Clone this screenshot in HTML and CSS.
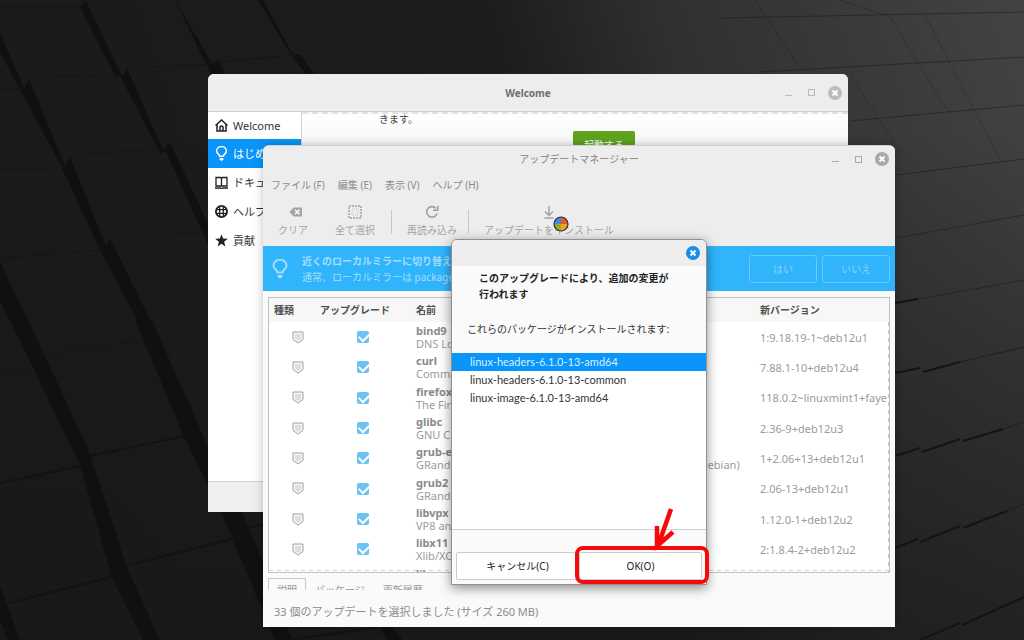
FILE: index.html
```html
<!DOCTYPE html>
<html lang="ja">
<head>
<meta charset="utf-8">
<title>アップデートマネージャー</title>
<link rel="stylesheet" href="styles.css">
</head>
<body>
<svg width="0" height="0" class="defs" aria-hidden="true">
  <symbol id="close" viewBox="0 0 14 14"><circle cx="7" cy="7" r="7" fill="currentColor"/><path d="M4.500 4.500l5 5m0-5l-5 5" stroke="#fff" stroke-width="2"/></symbol>
  <symbol id="bulb" viewBox="0 0 16 20"><path d="M5.500 13.500c0-2.500-4-3.200-4-7a6.500 5.800 0 0 1 13 0c0 3.800-4 4.500-4 7z" fill="none" stroke="currentColor" stroke-width="2"/><path d="M5.500 16h5v1.500l-1.500 2H7l-1.500-2z" fill="currentColor"/></symbol>
  <symbol id="shield" viewBox="0 0 12 13"><path d="M1 1h10v7.500L6 12 1 8.500z" fill="#f6f6f6" stroke="#a0a0a0"/><path d="M3 3h6v4.500L6 10 3 7.500z" fill="#dedede"/></symbol>
</svg>
<main class="desktop">
  <svg class="wallpaper" viewBox="0 0 1024 640" preserveAspectRatio="none" aria-hidden="true">
    <defs>
      <linearGradient id="shade" x1="0" y1="0.200" x2="1" y2="0"><stop offset="0" stop-color="#1a1a1a"/><stop offset=".5" stop-color="#1d1d1d"/><stop offset=".66" stop-color="#303030"/><stop offset="1" stop-color="#434343"/></linearGradient>
      <linearGradient id="fall" x1="0" y1="0" x2="0" y2="1"><stop offset=".2" stop-color="#181818" stop-opacity="0"/><stop offset="1" stop-color="#181818" stop-opacity=".7"/></linearGradient>
    </defs>
    <rect width="1024" height="640" fill="url(#shade)"/>
    <rect width="1024" height="640" fill="url(#fall)"/>
    <g fill="#101010">
      <path d="M0 33L24 88 29 79 65 166 70 157 106 246 110 238 150 320 190 405 240 525 246 535 292 640 275 640 228 528 180 412 140 325 100 250 62 168 58 160 20 90 0 52z"/>
      <path d="M80 7L86 1 122 76 127 68 163 150 170 142 210 228 208 245 166 152 160 153 120 76 116 78z"/>
      <path d="M175 0L212 64 218 60 225 74 211 74 206 64z"/>
      <path d="M258 0L263 0 293 55 300 54 314 74 306 74 292 56z"/>
      <path d="M0 262L28 320 84 440 90 455 128 570 160 640 143 640 112 578 80 465 10 320 0 302z"/>
      <path d="M0 586L20 640 8 640 0 620z"/>
      <path d="M135 320L152 320 208 448 208 486 182 432z"/>
      <path d="M228 512L242 512 291 627 284 627z"/>
      <path d="M380 627L392 627 403 640 387 640z"/>
    </g>
    <g fill="none" stroke="#121212" stroke-width="2">
      <path d="M0 483L85 465M85 457L185 436M130 565L240 537M10 603L115 576M240 530L263 524M290 640L440 618"/>
    </g>
    <g fill="none" stroke="#161616">
      <path d="M0 7L80 7M25 77L120 75M125 68L212 64M0 90L24 88M68 155L165 149M0 170L58 168M110 238L205 232M0 258L100 250M45 355L145 340M0 375L30 369M150 328L208 320M218 62L295 55"/>
    </g>
    <g fill="none" stroke="#1c1c1c" stroke-opacity=".55">
      <path d="M720 18L1024 12M760 72L1024 57M850 121L1024 105M897 175L1024 159M897 238L1024 215M897 303L1024 280"/>
      <path stroke-opacity=".3" d="M700 0L718 15M755 0L800 68M850 75L902 155M840 0L890 17 950 115M925 15L1000 160M915 200L950 235"/>
    </g>
    <g fill="none" stroke="#141414" stroke-width="2">
      <path d="M895 373L920 368M923 372L960 362M895 303L918 299M895 456L920 448M922 452L960 439M963 441L1003 429M895 548L918 539M920 542L960 526M963 528L1007 511M920 640L960 623M962 625L1024 597"/>
    </g>
    <path d="M960 362L1024 347M1003 429L1024 422M1007 511L1024 504" stroke="#1f1f1f"/>
  </svg>

  <section class="window welcome" aria-label="Welcome">
    <header class="titlebar">
      <h1 class="title strong">Welcome</h1>
      <div class="controls faded">
        <button class="ctl" aria-label="最小化"><span class="min"></span></button>
        <button class="ctl" aria-label="最大化"><span class="max"></span></button>
        <button class="ctl" aria-label="閉じる"><svg class="x"><use href="#close"/></svg></button>
      </div>
    </header>
    <div class="welcome-body">
      <nav class="side">
        <a href="#" class="side-item first"><svg class="side-icon" viewBox="0 0 13 13" fill="none" stroke="#222" stroke-width="1.500"><path d="M.5 6.500L6.500 1l6 5.500M2 5.500v6.500h9V5.500M5 12V8q1.500-2 3 0v4"/></svg>Welcome</a>
        <a href="#" class="side-item active"><svg class="side-icon"><use href="#bulb"/></svg>はじめに</a>
        <a href="#" class="side-item"><svg class="side-icon" viewBox="0 0 13 13" fill="none" stroke="#222" stroke-width="1.300"><path d="M1 1.500h4.500l1 1 1-1H12V10H1zM6.500 2v8M0 12h5l1.500.5L8 12h5"/></svg>ドキュメント</a>
        <a href="#" class="side-item"><svg class="side-icon" viewBox="0 0 13 13" fill="none" stroke="#222"><circle cx="6.500" cy="6.500" r="5.600" stroke-width="1.800"/><path d="M4.700 1v11M8.300 1v11M1 4.700h11M1 8.300h11" stroke-width="1.300"/></svg>ヘルプ</a>
        <a href="#" class="side-item"><svg class="side-icon" viewBox="0 0 13 13"><path d="M6.500.3l1.600 4.300 4.700.2-3.700 2.900 1.300 4.700-3.900-2.700-3.900 2.700 1.300-4.700L.2 4.800l4.700-.2z" fill="#222"/></svg>貢献</a>
      </nav>
      <div class="page">
        <p class="page-text">きます。</p>
        <button class="launch">起動する</button>
      </div>
    </div>
    <footer class="welcome-foot"></footer>
  </section>

  <section class="window manager" aria-label="アップデートマネージャー">
    <header class="titlebar short">
      <h1 class="title">アップデートマネージャー</h1>
      <div class="controls">
        <button class="ctl" aria-label="最小化"><span class="min"></span></button>
        <button class="ctl" aria-label="最大化"><span class="max"></span></button>
        <button class="ctl" aria-label="閉じる"><svg class="x"><use href="#close"/></svg></button>
      </div>
    </header>
    <nav class="menubar">
      <button class="menu">ファイル (F)</button><button class="menu">編集 (E)</button><button class="menu">表示 (V)</button><button class="menu">ヘルプ (H)</button>
    </nav>
    <div class="toolbar">
      <button class="tool narrow"><svg class="tool-icon shifted" viewBox="0 0 14 14"><path d="M4.500 2.500h8.500v9H4.500L.5 7z" fill="#a6a6a6"/><path d="M6 4.800l4.500 4.500m0-4.500L6 9.300" stroke="#fff" stroke-width="1.500"/></svg>クリア</button>
      <button class="tool wide"><svg class="tool-icon" viewBox="0 0 14 14" fill="none" stroke="#a0a0a0"><path d="M1 1h12v12H1z" stroke-width="1.500" stroke-dasharray="2 1"/><path d="M4 4h6v6H4z" stroke-dasharray="1 1" stroke="#c0c0c0"/></svg>全て選択</button>
      <span class="sep"></span>
      <button class="tool wide"><svg class="tool-icon" viewBox="0 0 14 14" fill="none" stroke="#a0a0a0" stroke-width="1.600"><path d="M11 3.500A5.300 5.300 0 1 0 12 8.500M12.800.8v4.500H8"/></svg>再読み込み</button>
      <span class="sep"></span>
      <button class="tool install"><svg class="tool-icon" viewBox="0 0 14 14" fill="none" stroke="#a0a0a0" stroke-width="1.400"><path d="M7 1v9M3 6.500l4 4 4-4M2.500 13h9"/></svg>アップデートをインストール</button>
    </div>
    <div class="infobar">
      <svg class="info-icon"><use href="#bulb"/></svg>
      <div class="info-text"><strong>近くのローカルミラーに切り替え</strong><span>通常、ローカルミラーは packages</span></div>
      <button class="answer">はい</button><button class="answer">いいえ</button>
    </div>
    <div class="content">
      <div class="list-frame">
        <table class="updates">
          <colgroup><col class="c-kind"><col class="c-check"><col class="c-name"><col></colgroup>
          <thead><tr><th>種類</th><th>アップグレード</th><th>名前</th><th>新バージョン</th></tr></thead>
          <tbody>
            <tr><td><svg class="shield"><use href="#shield"/></svg></td><td><input type="checkbox" aria-label="bind9" checked></td><td><b>bind9</b>DNS Lookup</td><td>1:9.18.19-1~deb12u1</td></tr>
            <tr><td><svg class="shield"><use href="#shield"/></svg></td><td><input type="checkbox" aria-label="curl" checked></td><td><b>curl</b>Command</td><td>7.88.1-10+deb12u4</td></tr>
            <tr><td><svg class="shield"><use href="#shield"/></svg></td><td><input type="checkbox" aria-label="firefox" checked></td><td><b>firefox</b>The Firefox</td><td>118.0.2~linuxmint1+faye</td></tr>
            <tr><td><svg class="shield"><use href="#shield"/></svg></td><td><input type="checkbox" aria-label="glibc" checked></td><td><b>glibc</b>GNU C Lib</td><td>2.36-9+deb12u3</td></tr>
            <tr><td><svg class="shield"><use href="#shield"/></svg></td><td><input type="checkbox" aria-label="grub-efi" checked></td><td><b>grub-efi</b>GRand Unified Bootloader, version 2 (amd64 signed by Debian)</td><td>1+2.06+13+deb12u1</td></tr>
            <tr><td><svg class="shield"><use href="#shield"/></svg></td><td><input type="checkbox" aria-label="grub2" checked></td><td><b>grub2</b>GRand Un</td><td>2.06-13+deb12u1</td></tr>
            <tr><td><svg class="shield"><use href="#shield"/></svg></td><td><input type="checkbox" aria-label="libvpx" checked></td><td><b>libvpx</b>VP8 and</td><td>1.12.0-1+deb12u2</td></tr>
            <tr><td><svg class="shield"><use href="#shield"/></svg></td><td><input type="checkbox" aria-label="libx11" checked></td><td><b>libx11</b>Xlib/XCB</td><td>2:1.8.4-2+deb12u2</td></tr>
            <tr><td></td><td></td><td><b>lib</b>X11</td><td></td></tr>
          </tbody>
        </table>
      </div>
      <div class="tabs"><button class="tab on">説明</button><button class="tab">パッケージ</button><button class="tab">更新履歴</button></div>
      <p class="status">33 個のアップデートを選択しました (サイズ 260 MB)</p>
    </div>
  </section>

  <section class="window dialog" role="dialog" aria-labelledby="dialog-title">
    <header class="dialog-bar"><button class="ctl" aria-label="閉じる"><svg class="x"><use href="#close"/></svg></button></header>
    <h2 class="dialog-title" id="dialog-title">このアップグレードにより、追加の変更が<br>行われます</h2>
    <p class="dialog-text">これらのパッケージがインストールされます:</p>
    <ul class="packages">
      <li class="selected">linux-headers-6.1.0-13-amd64</li>
      <li>linux-headers-6.1.0-13-common</li>
      <li>linux-image-6.1.0-13-amd64</li>
    </ul>
    <footer class="dialog-foot"><button class="choice">キャンセル(C)</button><button class="choice">OK(O)</button></footer>
  </section>

  <svg class="marker" viewBox="0 0 136 80" fill="none" stroke="#f50a0a" aria-hidden="true">
    <rect x="3" y="42" width="130" height="34" rx="6" stroke-width="4"/>
    <path d="M97 3L84 40M83 20V40L99 26" stroke-width="4.500"/><path d="M82 30l8 2-8 9z" fill="#f50a0a"/>
  </svg>
  <svg class="pointer" viewBox="0 0 16 16" aria-hidden="true">
    <circle cx="8" cy="8" r="7" fill="#f2a51c"/><path d="M8 8V1a7 7 0 0 1 7 7z" fill="#e8562c"/><path d="M8 8V1a7 7 0 0 0-7 7z" fill="#3f8ae0"/><path d="M8 8H1a7 7 0 0 0 7 7z" fill="#8fae2c"/><circle cx="8" cy="8" r="7" fill="none" stroke="#26303a" stroke-width="1.200"/>
  </svg>
</main>
</body>
</html>
```

FILE: styles.css
```css
* { box-sizing: border-box; }
body, h1, h2, p, ul { margin: 0; padding: 0; }
body {
  font: 11px/16px "Noto Sans", "Noto Sans CJK JP", sans-serif;
  color: #333;
  background: #1a1a1a;
}
button { font: inherit; color: inherit; background: none; border: 0; padding: 0; margin: 0; }
a { color: inherit; text-decoration: none; }
.defs { position: absolute; }
.desktop { position: relative; min-height: 100vh; overflow: hidden; }
.wallpaper { position: absolute; inset: 0; width: 100%; height: 100%; }

.window { position: absolute; display: flex; flex-direction: column; border-radius: 6px 6px 0 0; overflow: hidden; }
.welcome { left: 208px; top: 74px; width: 640px; height: 438px; background: #fff; }
.manager { left: 263px; top: 145px; width: 632px; height: 482px; background: #ededed; border-top: 1px solid #d0d0d0; box-shadow: 0 0 10px rgba(0, 0, 0, .25); }
.dialog { left: 451px; top: 239px; width: 256px; height: 346px; background: #fafafa; border: 1px solid #909090; box-shadow: 0 3px 12px rgba(0, 0, 0, .45); }

.titlebar { display: grid; grid-template-columns: 1fr auto 1fr; align-items: center; height: 38px; background: #ededed; border-bottom: 1px solid #cfcfcf; flex: none; }
.titlebar.short { height: 26px; border: 0; }
.title { grid-column: 2; font-size: 10px; font-weight: 400; color: #848484; }
.title.strong { font-size: 10px; font-weight: 700; color: #707070; }
.controls { display: flex; justify-content: flex-end; align-items: center; gap: 8px; padding-right: 6px; color: #a9a9a9; }
.controls.faded { color: #bcbcbc; }
.ctl { display: flex; align-items: center; justify-content: center; width: 15px; height: 15px; }
.x { width: 14px; height: 14px; }
.min { width: 7px; border-top: 1px solid currentColor; margin-top: 5px; }
.max { width: 7px; height: 7px; border: 1px solid currentColor; }

.welcome-body { display: flex; flex: 1; min-height: 0; }
.side { width: 94px; border-right: 1px solid #d4d4d4; }
.side-item { display: flex; align-items: center; gap: 5px; height: 29px; padding-left: 7px; white-space: nowrap; }
.side-item.first { height: 27px; }
.side-item.active { background: #0995f9; color: #fff; }
.side-icon { width: 13px; height: 13px; flex: none; }
.side-item.active .side-icon { height: 15px; }
.page { flex: 1; border-top: 2px dashed #e2e2e2; padding-left: 77px; background: linear-gradient(#fff, #f8f8f8 32px); }
.page-text { font-size: 10px; line-height: 10px; color: #444; }
.launch { display: block; margin: 7px 0 0 194px; width: 62px; height: 27px; background: #5fa31f; color: #fff; border-radius: 2px; font-size: 10px; }
.welcome-foot { height: 31px; background: #efefef; border-top: 1px solid #cfcfcf; }

.menubar { display: flex; gap: 13px; padding: 5px 8px; color: #8c8c8c; font-size: 10px; }
.menu { white-space: nowrap; }
.toolbar { display: flex; align-items: center; height: 48px; color: #a3a3a3; font-size: 10px; flex: none; }
.tool { display: flex; flex-direction: column; align-items: center; gap: 3px; height: 35px; white-space: nowrap; }
.tool-icon { width: 14px; height: 14px; flex: none; }
.tool-icon.shifted { margin-left: 6px; }
.narrow { width: 60px; }
.wide { width: 64px; }
.sep { height: 24px; margin: 0 8px 0 4px; border-left: 1px solid #c9c9c9; }
.install { width: 144px; }

.infobar { display: flex; align-items: center; gap: 5px; height: 45px; padding: 0 5px 0 8px; background: #30b5fd; color: #a6dcfb; flex: none; }
.info-icon { width: 18px; height: 20px; flex: none; }
.info-text { display: flex; flex-direction: column; flex: 1; min-width: 0; padding-left: 8px; white-space: nowrap; overflow: hidden; font-size: 10px; }
.answer { width: 68px; height: 28px; border: 1px solid #6ccafb; border-radius: 3px; font-size: 10px; color: #8bd3fb; flex: none; }

.content { display: flex; flex-direction: column; flex: 1; min-height: 0; padding: 6px 5px 0; background: #fafafa; }
.list-frame { height: 276px; overflow: hidden; border: 1px solid #c2c2c2; background: linear-gradient(90deg, #d4d4d4 4px, transparent 4px) 0 272px / 8px 1px repeat-x, linear-gradient(#c8c8c8 4px, transparent 4px) 619px 0 / 1px 8px repeat-y, #fff; flex: none; }
.updates { width: 100%; height: 297px; table-layout: fixed; border-collapse: collapse; color: #9b9b9b; line-height: 13px; }
.c-kind { width: 46px; }
.c-check { width: 96px; }
.c-name { width: 344px; }
.updates th { height: 24px; padding: 0 0 0 5px; text-align: left; font-size: 10px; color: #505050; white-space: nowrap; background: #f7f7f7; }
.updates td { padding: 0 0 0 5px; white-space: nowrap; vertical-align: middle; }
.updates td:nth-child(1) { padding-left: 23px; }
.updates td:nth-child(2) { padding: 0; text-align: center; }
.updates b { display: block; color: #8a8a8a; }
.shield { display: block; width: 12px; height: 13px; }
.updates input { appearance: none; display: block; width: 12px; height: 12px; margin: 0 auto; padding: 2px 0 0 2px; border-radius: 2px; background: #6cc3f3; }
.updates input::after { content: ""; display: block; width: 8px; height: 5px; border: solid #fff; border-width: 0 0 2px 2px; transform: rotate(-45deg); }
.tabs { display: flex; height: 12px; margin-top: 5px; overflow: hidden; font-size: 10px; color: #969696; flex: none; }
.tab { height: 24px; padding: 0 9px; flex: none; }
.tab.on { border: 1px solid #c6c6c6; padding: 0 8px; }
.status { padding: 14px 6px; color: #8c8c8c; }

.dialog-bar { display: flex; justify-content: flex-end; align-items: center; height: 26px; padding-right: 6px; background: #eee; color: #158fe8; flex: none; }
.dialog-title { padding: 4px 0 0 27px; font-size: 10px; font-weight: 700; color: #222; white-space: nowrap; }
.dialog-text { padding: 19px 0 16px 15px; font-size: 10px; color: #333; white-space: nowrap; }
.packages { flex: 1; list-style: none; background: #fff; border-bottom: 1px solid #cfcfcf; line-height: 18px; font-family: Lato, "Noto Sans CJK JP", sans-serif; }
.packages li { padding-left: 18px; }
.packages .selected { background: #0995f9; color: #d8effe; }
.dialog-foot { display: flex; padding: 22px 4px 4px; }
.choice { flex: 1; height: 28px; border: 1px solid #ccc; border-radius: 2px; background: #fff; color: #222; font-size: 10px; }

.marker { position: absolute; left: 574px; top: 506px; width: 136px; height: 80px; pointer-events: none; }
.pointer { position: absolute; left: 553px; top: 216px; width: 16px; height: 16px; pointer-events: none; }
```
